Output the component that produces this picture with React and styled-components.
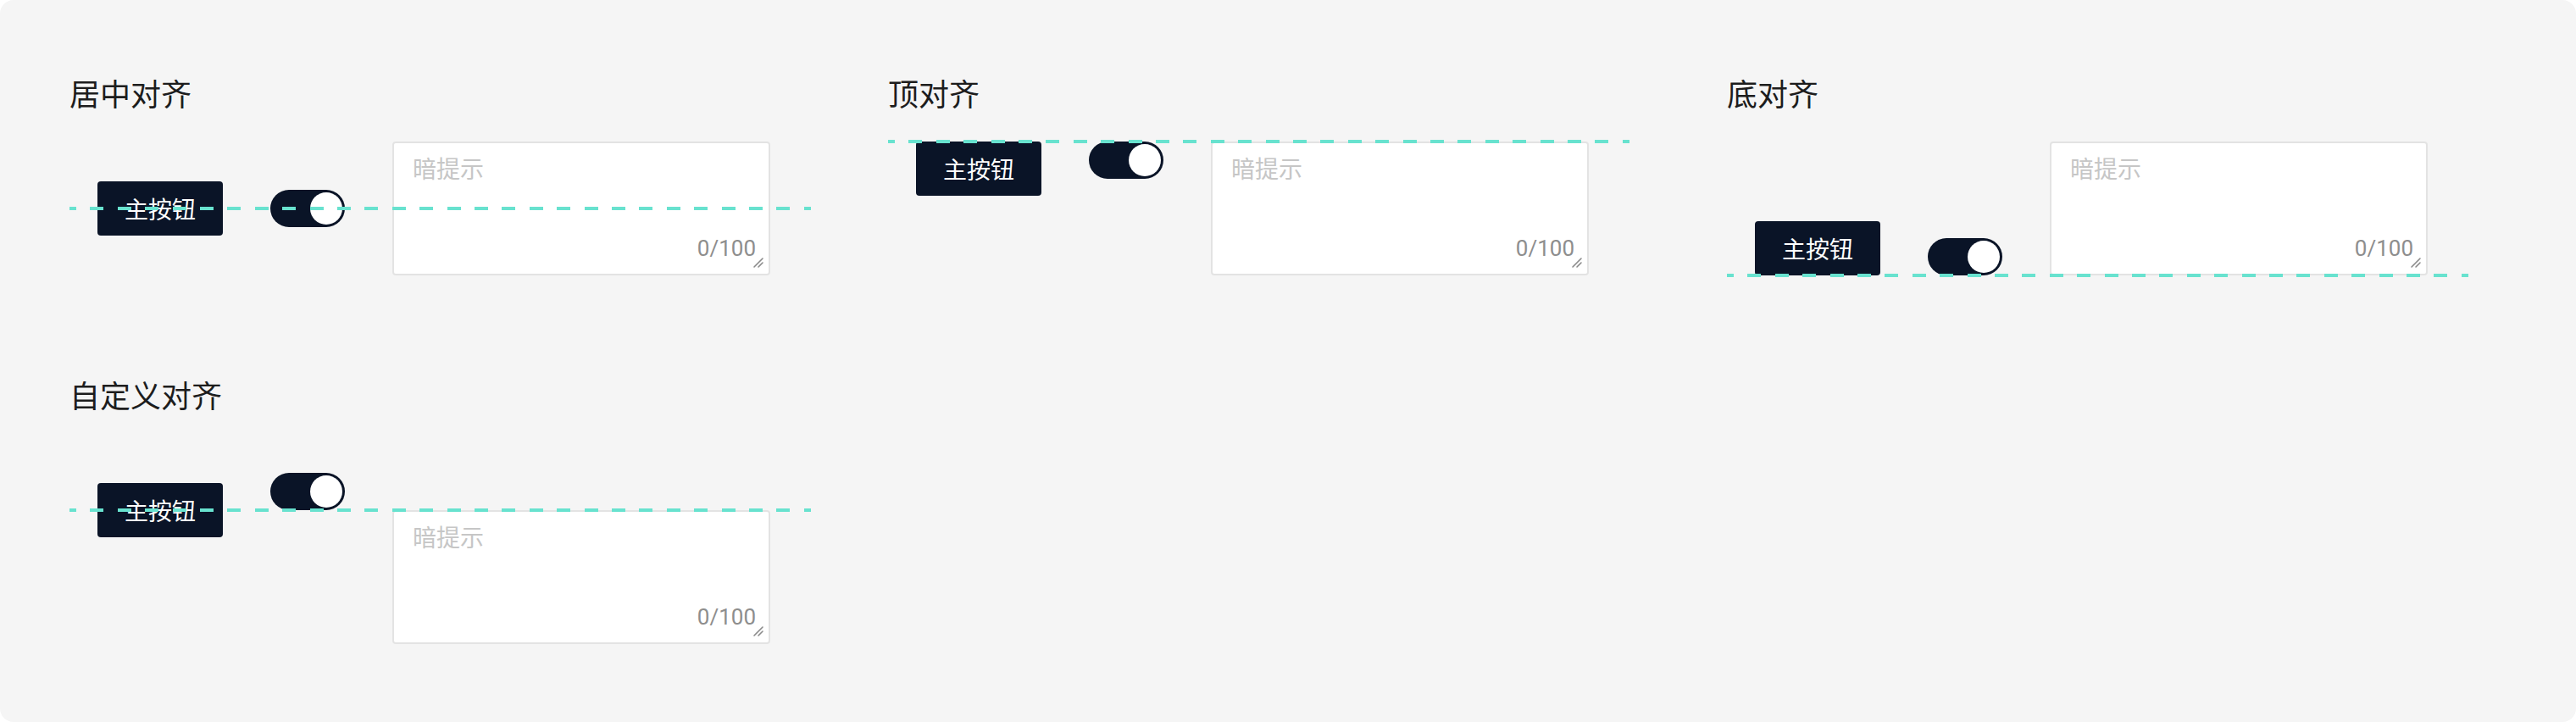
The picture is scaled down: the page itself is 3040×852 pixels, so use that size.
import React from "react";
import styled, { createGlobalStyle, css } from "styled-components";

const GlobalStyle = createGlobalStyle`
  html, body {
    margin: 0;
    padding: 0;
    background: #ffffff;
  }
  body {
    font-family: "Noto Sans CJK SC", "Noto Sans", sans-serif;
  }
`;

const Card = styled.main`
  box-sizing: border-box;
  width: 3040px;
  height: 852px;
  padding: 82px 0 0 82px;
  background: #f5f5f5;
  border-radius: 16px;
  overflow: hidden;
`;

const Grid = styled.div`
  display: grid;
  grid-template-columns: 966px 990px 1fr;
  row-gap: 113px;
`;

const Demo = styled.section`
  display: flex;
  flex-direction: column;
`;

const Title = styled.h2`
  margin: 0 0 31px;
  font-size: 36px;
  line-height: 54px;
  font-weight: 400;
  color: #1d1d1d;
`;

const alignMap = {
  center: "center",
  top: "flex-start",
  bottom: "flex-end",
  custom: "center",
};

const guideTop = {
  center: "77px",
  top: "-2px",
  bottom: "156px",
  custom: "77px",
};

const Row = styled.div`
  position: relative;
  display: flex;
  align-items: ${(p) => alignMap[p.$align]};
  gap: 56px;
  height: 158px;
  padding-left: 33px;
`;

const Guide = styled.div`
  position: absolute;
  left: 0;
  top: ${(p) => guideTop[p.$align]};
  width: 875px;
  height: 4px;
  z-index: 2;
  pointer-events: none;
  background: repeating-linear-gradient(
    90deg,
    #68e2cf 0 8px,
    transparent 8px 24.4px,
    #68e2cf 24.4px 32.4px
  );
`;

const PrimaryButton = styled.button`
  flex: none;
  box-sizing: border-box;
  height: 64px;
  padding: 0 32px;
  border: none;
  border-radius: 4px;
  background: #0a1427;
  color: #ffffff;
  font-family: "Noto Sans CJK SC", sans-serif;
  font-size: 28px;
  line-height: 64px;
`;

const Switch = styled.div`
  flex: none;
  position: relative;
  width: 88px;
  height: 44px;
  border-radius: 22px;
  background: #0a1427;
  ${(p) =>
    p.$lift &&
    css`
      transform: translateY(-50%);
    `}
`;

const Knob = styled.span`
  position: absolute;
  top: 3px;
  right: 3px;
  width: 38px;
  height: 38px;
  border-radius: 50%;
  background: #ffffff;
`;

const TextareaBox = styled.div`
  flex: none;
  position: relative;
  box-sizing: border-box;
  width: 446px;
  height: 158px;
  border: 2px solid #e3e3e3;
  border-radius: 4px;
  background: #ffffff;
  ${(p) =>
    p.$drop &&
    css`
      transform: translateY(50%);
    `}
`;

const Field = styled.textarea`
  display: block;
  box-sizing: border-box;
  width: 100%;
  height: 100%;
  margin: 0;
  padding: 8px 22px;
  border: none;
  outline: none;
  resize: none;
  background: transparent;
  font-family: "Noto Sans CJK SC", sans-serif;
  font-size: 28px;
  line-height: 42px;
  color: #1d1d1d;
  &::placeholder {
    color: #c6c6c6;
  }
`;

const Counter = styled.span`
  position: absolute;
  right: 15px;
  bottom: 15px;
  font-family: Roboto, "Noto Sans", sans-serif;
  font-size: 26px;
  line-height: 30px;
  color: #8e8e8e;
`;

const Grip = styled.svg`
  position: absolute;
  right: 5px;
  bottom: 6px;
  width: 14px;
  height: 14px;
`;

const ResizeGrip = () => (
  <Grip viewBox="0 0 14 14">
    <path d="M2 12 L12 2 M7 12 L12 7" stroke="#8a8a8a" strokeWidth="1.6" strokeLinecap="round" fill="none" />
  </Grip>
);

const demos = [
  { title: "居中对齐", align: "center" },
  { title: "顶对齐", align: "top" },
  { title: "底对齐", align: "bottom" },
  { title: "自定义对齐", align: "custom" },
];

const App = () => {
  return (
    <>
      <GlobalStyle />
      <Card>
        <Grid>
          {demos.map((demo) => {
            const custom = demo.align === "custom";
            return (
              <Demo key={demo.title}>
                <Title>{demo.title}</Title>
                <Row $align={demo.align}>
                  <Guide $align={demo.align} />
                  <PrimaryButton>主按钮</PrimaryButton>
                  <Switch $lift={custom}>
                    <Knob />
                  </Switch>
                  <TextareaBox $drop={custom}>
                    <Field placeholder="暗提示" />
                    <Counter>0/100</Counter>
                    <ResizeGrip />
                  </TextareaBox>
                </Row>
              </Demo>
            );
          })}
        </Grid>
      </Card>
    </>
  );
};

export default App;
